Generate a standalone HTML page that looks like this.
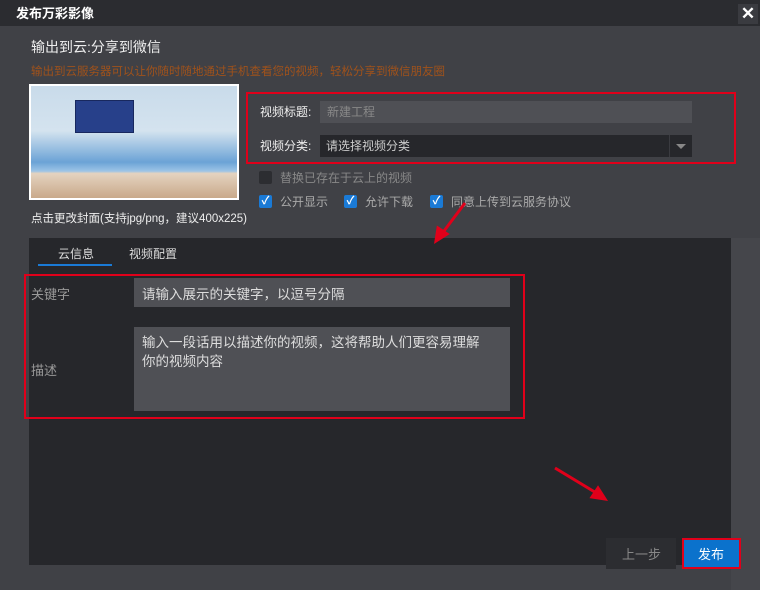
<!DOCTYPE html>
<html><head><meta charset="utf-8"><style>
*{margin:0;padding:0;box-sizing:border-box}
body{width:760px;height:590px;background:#404146;font-family:"Liberation Sans","Noto Sans CJK SC",sans-serif;position:relative;overflow:hidden;color:#ddd}
.a{position:absolute}
.t{font-size:12px;white-space:nowrap;margin-top:-2px}
.cb{width:13px;height:13px;background:#1a7ad6;border-radius:2px;color:#fff;font-size:11px;line-height:13px;text-align:center;font-weight:bold}
</style></head><body>
<div class="a" style="left:0;top:0;width:760px;height:26px;background:#2b2c30"></div>
<div class="a t" style="left:16px;top:5px;font-size:13px;font-weight:bold;color:#fff">发布万彩影像</div>
<div class="a" style="left:738px;top:4px;width:20px;height:20px;background:#3a3b40;color:#fff;font-size:17px;text-align:center;line-height:20px;font-weight:bold">✕</div>
<div class="a t" style="left:31px;top:39px;font-size:14px;color:#eee">输出到云:分享到微信</div>
<div class="a t" style="left:31px;top:65px;color:#a0521b;font-size:11.5px">输出到云服务器可以让你随时随地通过手机查看您的视频，轻松分享到微信朋友圈</div>
<div class="a" style="left:29px;top:84px;width:210px;height:116px;background:#fff;padding:2px">
<div style="width:100%;height:100%;background:linear-gradient(#c9dbea 0%,#d4e3ef 40%,#6ba3d6 68%,#9cc4e6 76%,#e4d3c0 78%,#c9a98a 100%)"></div></div>
<div class="a" style="left:75px;top:100px;width:59px;height:33px;background:#27408a;border:1px solid #18285e"></div>
<div class="a t" style="left:31px;top:212px;font-size:11.5px;color:#eee">点击更改封面(支持jpg/png，建议400x225)</div>
<div class="a" style="left:246px;top:92px;width:490px;height:72px;border:2px solid #e0001a"></div>
<div class="a t" style="left:260px;top:105px;color:#eee">视频标题:</div>
<div class="a" style="left:320px;top:101px;width:372px;height:22px;background:#4f5055"></div>
<div class="a t" style="left:327px;top:105px;color:#888">新建工程</div>
<div class="a t" style="left:260px;top:139px;color:#eee">视频分类:</div>
<div class="a" style="left:320px;top:135px;width:372px;height:22px;background:#26272b"></div>
<div class="a" style="left:669px;top:135px;width:1px;height:22px;background:#3a3b40"></div>
<div class="a" style="left:676px;top:144px;border-left:5px solid transparent;border-right:5px solid transparent;border-top:5px solid #888"></div>
<div class="a t" style="left:326px;top:139px;color:#ccc">请选择视频分类</div>
<div class="a" style="left:259px;top:171px;width:13px;height:13px;background:#2c2d31;border-radius:2px"></div>
<div class="a t" style="left:280px;top:171px;color:#888">替换已存在于云上的视频</div>
<div class="a cb" style="left:259px;top:195px">✓</div><div class="a t" style="left:280px;top:195px;color:#aaa">公开显示</div>
<div class="a cb" style="left:344px;top:195px">✓</div><div class="a t" style="left:365px;top:195px;color:#aaa">允许下载</div>
<div class="a cb" style="left:430px;top:195px">✓</div><div class="a t" style="left:451px;top:195px;color:#aaa">同意上传到云服务协议</div>
<div class="a" style="left:29px;top:238px;width:702px;height:327px;background:#26272b"></div>
<div class="a" style="left:731px;top:238px;width:29px;height:352px;background:#45464b"></div>
<div class="a t" style="left:58px;top:247px;color:#ddd">云信息</div>
<div class="a t" style="left:129px;top:247px;color:#ddd">视频配置</div>
<div class="a" style="left:38px;top:264px;width:74px;height:2px;background:#1a7ad6"></div>
<div class="a" style="left:24px;top:274px;width:501px;height:145px;border:2px solid #e0001a"></div>
<div class="a t" style="left:31px;top:286px;font-size:13px;color:#999">关键字</div>
<div class="a" style="left:134px;top:278px;width:376px;height:29px;background:#4f5055"></div>
<div class="a t" style="left:142px;top:285px;font-size:13.5px;color:#ddd">请输入展示的关键字，以逗号分隔</div>
<div class="a t" style="left:31px;top:362px;font-size:13px;color:#999">描述</div>
<div class="a" style="left:134px;top:327px;width:376px;height:84px;background:#4f5055"></div>
<div class="a t" style="left:142px;top:335px;font-size:13.5px;line-height:19px;color:#ddd">输入一段话用以描述你的视频，这将帮助人们更容易理解<br>你的视频内容</div>
<svg class="a" style="left:0;top:0" width="760" height="590"><g stroke="#e0001a" stroke-width="3" fill="#e0001a">
<line x1="465" y1="203" x2="441" y2="235"/><polygon points="436,241 438,228 447,234" />
<line x1="555" y1="468" x2="598" y2="494"/><polygon points="605,499 592,497 598,488"/></g></svg>
<div class="a" style="left:606px;top:538px;width:70px;height:31px;background:#2c2d31"></div>
<div class="a t" style="left:622px;top:546px;font-size:13px;color:#888">上一步</div>
<div class="a" style="left:682px;top:538px;width:59px;height:31px;background:#0b72cc;border:2px solid #e0001a"></div>
<div class="a t" style="left:698px;top:546px;font-size:13px;color:#fff">发布</div>
</body></html>
